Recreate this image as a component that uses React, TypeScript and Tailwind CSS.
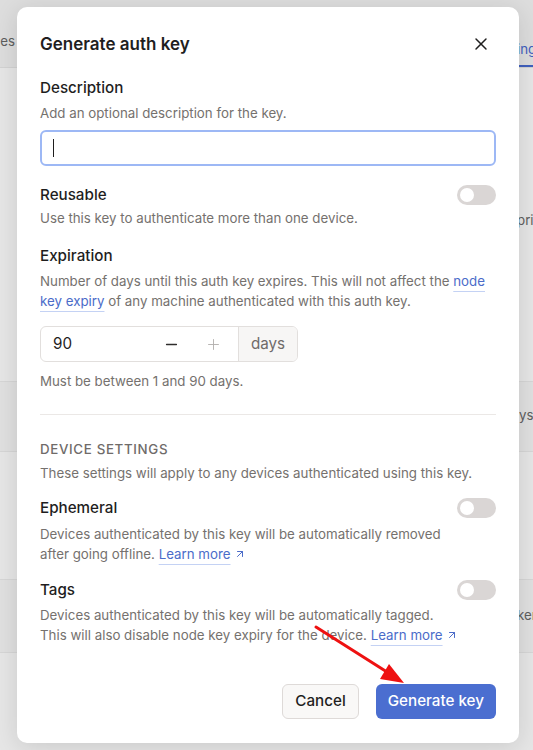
import { X, ArrowUpRight, Minus, Plus } from 'lucide-react'

function Toggle() {
  return (
    <div className="w-[39px] h-[20px] shrink-0 rounded-full bg-[#dad6d5] p-[3px] flex items-center">
      <div className="w-[14px] h-[14px] rounded-full bg-white" />
    </div>
  )
}

function LearnMore() {
  return (
    <a className="text-[#4b6cc9] underline decoration-[#c4d2f4] underline-offset-[5px] whitespace-nowrap">
      Learn more
      <ArrowUpRight size={12} strokeWidth={2} className="inline ml-[3px] -mt-[2px]" />
    </a>
  )
}

export default function App() {
  return (
    <div className="relative h-[750px] w-full overflow-hidden bg-[#e6e6e6] font-['Inter',sans-serif] text-[#1f1e1e]">
      {/* page behind the dialog */}
      <div className="h-[68px] bg-[#dddddd] border-b border-[#d2d2d2] flex items-end justify-between pb-[15px] text-[13.3px] text-[#5e5e5e]">
        <div className="w-[15px] overflow-hidden flex justify-end whitespace-nowrap">
          <span>Services</span>
        </div>
        <div className="w-[16px] h-[53px] -mb-[15px] overflow-hidden whitespace-nowrap border-b-2 border-[#4160bd] flex items-start pt-[26px] text-[#4160bd]">
          <span>ings</span>
        </div>
      </div>
      <div className="flex flex-col text-[13.3px] text-[#5e5e5e]">
        <div className="pl-[517px] mt-[143px] whitespace-nowrap">priority</div>
        <div className="mt-[150px] h-[71px] bg-[#e0e0e0] border-y border-[#d6d6d6] pl-[519px] flex items-center whitespace-nowrap">
          ys
        </div>
        <div className="mt-[127px] h-[74px] bg-[#e0e0e0] border-y border-[#d6d6d6] pl-[517px] flex items-center whitespace-nowrap">
          ken
        </div>
      </div>

      {/* dialog */}
      <div className="absolute inset-0 flex items-center">
        <div className="ml-[17px] w-[502px] h-[736px] bg-white rounded-[10px] shadow-[0_4px_24px_rgba(0,0,0,0.12)] px-[23px] pt-[23px] pb-6 flex flex-col">
          <div className="flex items-center justify-between h-7">
            <h2 className="text-[17px] font-semibold leading-7">Generate auth key</h2>
            <X size={20} strokeWidth={1.75} className="mr-[5px] text-[#1f1e1e]" />
          </div>

          <div className="mt-[18px] text-[15.2px] font-medium leading-6">Description</div>
          <div className="mt-[3px] text-[13.3px] leading-5 text-[#75716e]">Add an optional description for the key.</div>
          <div className="mt-[7px] h-9 rounded-md border-2 border-[#9db8f5] flex items-center pl-[11px]">
            <span className="w-px h-[18px] bg-[#1f1e1e]" />
          </div>

          <div className="mt-[17px] flex items-center justify-between">
            <div className="text-[15.2px] font-medium leading-6">Reusable</div>
            <Toggle />
          </div>
          <div className="mt-px text-[13.3px] leading-5 text-[#75716e]">Use this key to authenticate more than one device.</div>

          <div className="mt-4 text-[15.2px] font-medium leading-6">Expiration</div>
          <div className="mt-[3px] text-[13.3px] leading-5 text-[#75716e]">
            Number of days until this auth key expires. This will not affect the{' '}
            <a className="text-[#4b6cc9] underline decoration-[#c4d2f4] underline-offset-[5px]">node key expiry</a> of any
            machine authenticated with this auth key.
          </div>
          <div className="mt-[15px] w-[258px] h-9 rounded-md border border-[#e2dfdd] flex overflow-hidden">
            <div className="flex-1 flex items-center pl-3 text-[15.2px]">
              <span className="flex-1">90</span>
              <Minus size={17} strokeWidth={1.8} className="text-[#2f2d2c]" />
              <Plus size={17} strokeWidth={1.3} className="ml-[25px] mr-[16px] text-[#b3afad]" />
            </div>
            <div className="w-[59px] border-l border-[#e2dfdd] bg-[#f7f6f5] flex items-center justify-center text-[15.2px] text-[#6f6b69]">
              days
            </div>
          </div>
          <div className="mt-[9px] text-[13.3px] leading-5 text-[#75716e]">Must be between 1 and 90 days.</div>

          <div className="mt-[23px] h-px bg-[#ebe8e6]" />

          <div className="mt-6 text-[13.3px] leading-5 font-medium tracking-wider text-[#6f6b69]">DEVICE SETTINGS</div>
          <div className="mt-1 text-[13.3px] leading-5 text-[#75716e]">
            These settings will apply to any devices authenticated using this key.
          </div>

          <div className="mt-[13px] flex items-center justify-between">
            <div className="text-[15.2px] font-medium leading-6">Ephemeral</div>
            <Toggle />
          </div>
          <div className="mt-1 max-w-[420px] text-[13.3px] leading-5 text-[#75716e]">
            Devices authenticated by this key will be automatically removed after going offline. <LearnMore />
          </div>

          <div className="mt-[14px] flex items-center justify-between">
            <div className="text-[15.2px] font-medium leading-6">Tags</div>
            <Toggle />
          </div>
          <div className="mt-[3px] max-w-[420px] text-[13.3px] leading-5 text-[#75716e]">
            Devices authenticated by this key will be automatically tagged. This will also disable node key expiry for
            the device. <LearnMore />
          </div>

          <div className="mt-auto flex justify-end gap-[17px]">
            <button className="h-[35px] px-3 rounded-md border border-[#dedad8] bg-[#f9f8f7] text-[15.2px] font-medium text-[#1f1e1e]">
              Cancel
            </button>
            <button className="h-[35px] px-3 rounded-md bg-[#4b6ed0] text-[15.2px] font-medium text-white">
              Generate key
            </button>
          </div>
        </div>
      </div>

      {/* red annotation arrow */}
      <svg className="absolute inset-0 pointer-events-none" width="533" height="750">
        <line x1="316" y1="627" x2="387" y2="672" stroke="#ee1111" strokeWidth="3" strokeLinecap="round" />
        <polygon points="404,683 380,679 389,664" fill="#ee1111" />
      </svg>
    </div>
  )
}
